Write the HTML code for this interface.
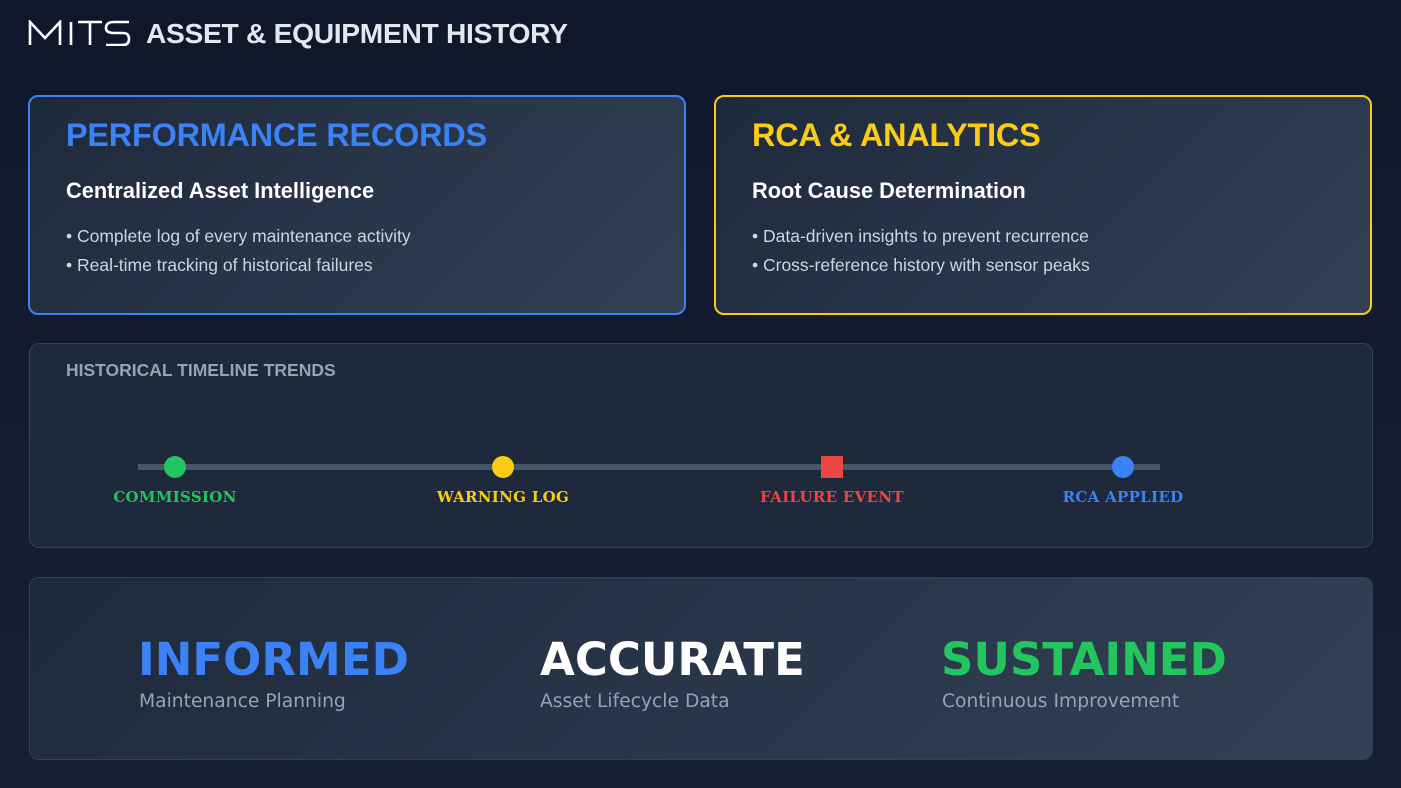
<!DOCTYPE html>
<html><head><meta charset="utf-8"><style>
*{margin:0;padding:0;box-sizing:border-box}
body{width:1401px;height:788px;overflow:hidden;background:linear-gradient(180deg,#0f172a 0%,#172033 100%);font-family:"Liberation Sans",sans-serif;position:relative;color:#fff}
.abs{position:absolute}
.hdr{left:146px;top:17px;font-size:28.2px;font-weight:bold;color:#e2e8f0;letter-spacing:-0.3px}
.card{position:absolute;top:95px;width:658px;height:220px;border:2px solid;border-radius:10px;background:linear-gradient(135deg,#1e293b 0%,#334155 100%)}
.card h2{position:absolute;left:36px;top:20px;font-size:32.4px;font-weight:bold;letter-spacing:-0.2px}
.card h3{position:absolute;left:36px;top:81px;font-size:21.8px;font-weight:bold;color:#fff}
.card p{position:absolute;left:36px;font-size:17.5px;color:#cbd5e1}
.panel{position:absolute;left:29px;width:1344px;border:1px solid #334155;border-radius:10px}
.lbl{position:absolute;top:488px;font-family:"DejaVu Serif","Liberation Serif",serif;font-weight:bold;font-size:15px;transform:translateX(-50%);white-space:nowrap;letter-spacing:0.3px}
.dot{position:absolute;width:22px;height:22px;border-radius:50%;top:456px}
.big{position:absolute;top:633px;font-family:"DejaVu Sans",sans-serif;font-weight:bold;font-size:45px}
.sub{position:absolute;top:691px;font-family:"DejaVu Sans",sans-serif;font-size:18.7px;color:#94a3b8}
</style></head><body>
<svg class="abs" style="left:28px;top:20px" width="104" height="26" viewBox="0 0 104 26" fill="none" stroke="#fff" stroke-width="2.6">
<path d="M2 25V2L17 18L32 2V25"/><path d="M43 2V25"/><path d="M50 2H74M62 2V25"/><path d="M101 2H86Q78 2 78 8Q78 13 86 13H95Q101 13 101 19Q101 25 95 25H78"/>
</svg>
<div class="abs hdr">ASSET &amp; EQUIPMENT HISTORY</div>

<div class="card" style="left:28px;border-color:#3b82f6">
<h2 style="color:#3b82f6">PERFORMANCE RECORDS</h2>
<h3>Centralized Asset Intelligence</h3>
<p style="top:129px">• Complete log of every maintenance activity</p>
<p style="top:158px">• Real-time tracking of historical failures</p>
</div>
<div class="card" style="left:714px;border-color:#facc15">
<h2 style="color:#facc15">RCA &amp; ANALYTICS</h2>
<h3>Root Cause Determination</h3>
<p style="top:129px">• Data-driven insights to prevent recurrence</p>
<p style="top:158px">• Cross-reference history with sensor peaks</p>
</div>

<div class="panel" style="top:343px;height:205px;background:#1e293b"></div>
<div class="abs" style="left:66px;top:360px;font-size:17.5px;font-weight:bold;color:#94a3b8">HISTORICAL TIMELINE TRENDS</div>
<div class="abs" style="left:138px;top:464px;width:1022px;height:6px;background:#475569"></div>
<div class="dot" style="left:164px;background:#22c55e"></div>
<div class="dot" style="left:492px;background:#facc15"></div>
<div class="abs" style="left:821px;top:456px;width:22px;height:22px;background:#ef4444"></div>
<div class="dot" style="left:1112px;background:#3b82f6"></div>
<div class="lbl" style="left:175px;color:#22c55e">COMMISSION</div>
<div class="lbl" style="left:503px;color:#facc15">WARNING LOG</div>
<div class="lbl" style="left:832px;color:#ef4444">FAILURE EVENT</div>
<div class="lbl" style="left:1123px;color:#3b82f6">RCA APPLIED</div>

<div class="panel" style="top:577px;height:183px;background:linear-gradient(135deg,#1e293b 0%,#334155 100%)"></div>
<div class="big" style="left:138px;color:#3b82f6">INFORMED</div>
<div class="big" style="left:540px;color:#fff">ACCURATE</div>
<div class="big" style="left:941px;color:#22c55e">SUSTAINED</div>
<div class="sub" style="left:139px">Maintenance Planning</div>
<div class="sub" style="left:540px">Asset Lifecycle Data</div>
<div class="sub" style="left:942px">Continuous Improvement</div>
</body></html>
